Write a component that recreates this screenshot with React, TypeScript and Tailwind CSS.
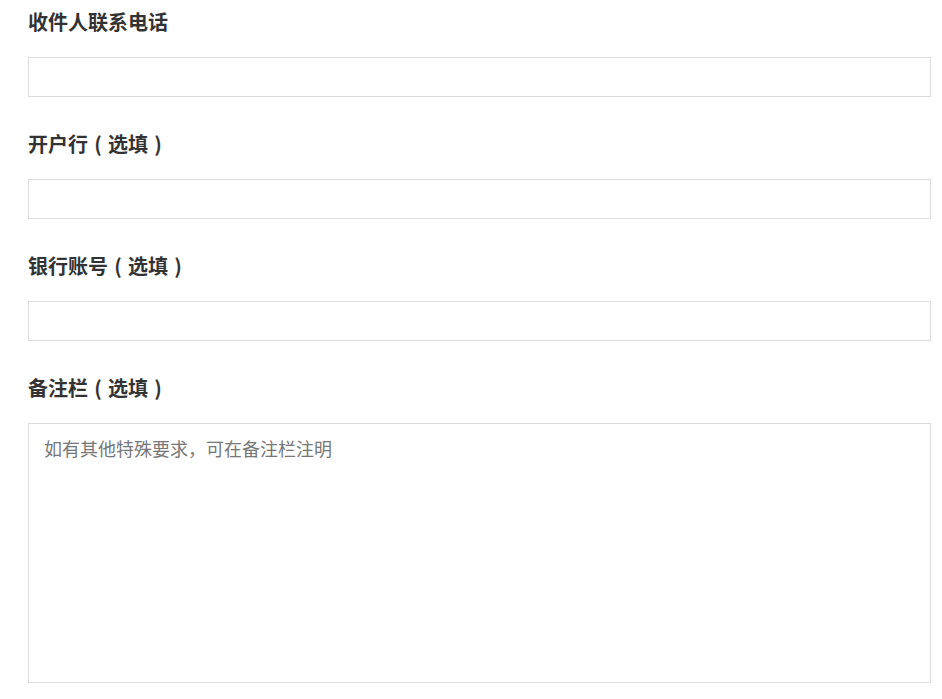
function Optional() {
  return (
    <>
      <span className="inline-block w-[20px] text-center">(</span>
      选填
      <span className="inline-block w-[20px] text-center">)</span>
    </>
  );
}

export default function App() {
  const fields = [
    { key: "phone", label: <>收件人联系电话</> },
    { key: "bank", label: <>开户行<Optional /></> },
    { key: "account", label: <>银行账号<Optional /></> },
  ];
  return (
    <div
      className="bg-white pl-[28px] pr-[11px] pt-[10px] pb-[16px] text-[#333]"
      style={{ fontFamily: '"Noto Sans CJK SC", "Noto Sans", sans-serif' }}
    >
      {fields.map((f) => (
        <div key={f.key} className="mb-[35px]">
          <label className="block text-[20px] font-bold leading-[24px] mb-[23px] whitespace-nowrap">{f.label}</label>
          <input type="text" className="block w-full h-[40px] border border-[#dddddd] outline-none px-[15px]" />
        </div>
      ))}
      <div>
        <label className="block text-[20px] font-bold leading-[24px] mb-[23px] whitespace-nowrap">
          备注栏<Optional />
        </label>
        <textarea
          className="block w-full h-[260px] border border-[#dddddd] outline-none px-[15px] py-[12px] text-[18px] leading-[24px] resize-none placeholder:text-[#777]"
          placeholder="如有其他特殊要求，可在备注栏注明"
        />
      </div>
    </div>
  );
}
